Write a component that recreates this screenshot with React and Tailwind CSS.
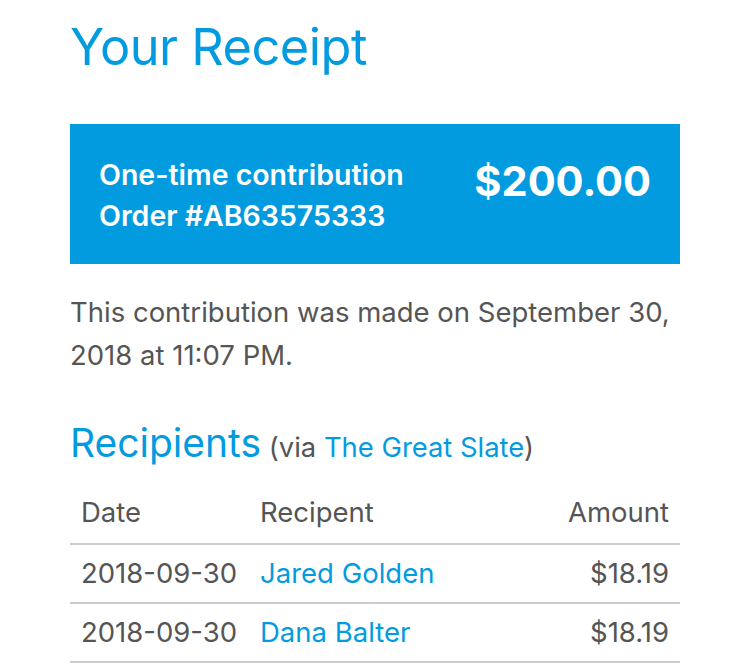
export default function App() {
  const rows = [
    { date: '2018-09-30', name: 'Jared Golden', amount: '$18.19' },
    { date: '2018-09-30', name: 'Dana Balter', amount: '$18.19' },
  ]

  return (
    <div className="min-h-screen bg-white px-[70px] pt-[14px] text-[#555555] [font-family:Inter,'Liberation_Sans',sans-serif]">
      <h1 className="text-[50.5px] leading-[66px] text-[#039be0] tracking-[-0.5px]">Your Receipt</h1>

      {/* Summary box */}
      <div className="mt-[44px] flex h-[140px] justify-between bg-[#039be0] px-[29px] pt-[30px] text-white">
        <div className="text-[28.5px] font-semibold leading-[41px]">
          <p>One-time contribution</p>
          <p>Order #AB63575333</p>
        </div>
        <p className="text-[41.5px] font-bold leading-[54px]">$200.00</p>
      </div>

      <p className="mt-[27px] text-[27.5px] leading-[43px]">
        This contribution was made on September 30, 2018 at 11:07 PM.
      </p>

      <h2 className="mt-[41px] text-[27.4px] leading-[50px]">
        <span className="text-[39px] text-[#039be0]">Recipients</span>{' '}
        (via <span className="text-[#039be0]">The Great Slate</span>)
      </h2>

      <table className="mt-[10px] w-full text-[27.5px]">
        <thead>
          <tr className="border-b-2 border-[#cccccc]">
            <th className="h-[62px] w-[190px] pl-[11px] text-left font-normal">Date</th>
            <th className="text-left font-normal">Recipent</th>
            <th className="pr-[11px] text-right font-normal">Amount</th>
          </tr>
        </thead>
        <tbody>
          {rows.map(function (r, i) {
            return (
              <tr key={i} className="border-b-2 border-[#cccccc]">
                <td className="h-[59px] pl-[11px]">{r.date}</td>
                <td className="text-[#039be0]">{r.name}</td>
                <td className="pr-[11px] text-right">{r.amount}</td>
              </tr>
            )
          })}
        </tbody>
      </table>
    </div>
  )
}
